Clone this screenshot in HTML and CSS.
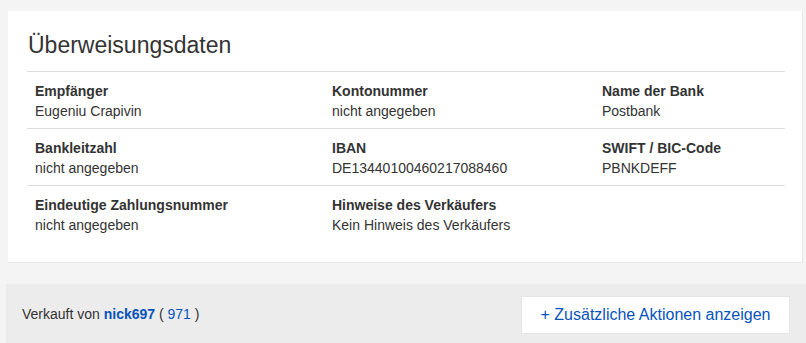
FILE: index.html
```html
<!DOCTYPE html>
<html lang="de">
<head>
    <meta charset="UTF-8">
    <title>Überweisungsdaten</title>
    <link rel="stylesheet" href="styles.css">
</head>
<body>
    <!-- Überweisungsdaten -->
    <div class="card">
        <h2 class="card-title">Überweisungsdaten</h2>
        <div class="info-row">
            <div class="info-cell">
                <div class="info-label">Empfänger</div>
                <div class="info-value">Eugeniu Crapivin</div>
            </div>
            <div class="info-cell">
                <div class="info-label">Kontonummer</div>
                <div class="info-value">nicht angegeben</div>
            </div>
            <div class="info-cell">
                <div class="info-label">Name der Bank</div>
                <div class="info-value">Postbank</div>
            </div>
        </div>
        <div class="info-row">
            <div class="info-cell">
                <div class="info-label">Bankleitzahl</div>
                <div class="info-value">nicht angegeben</div>
            </div>
            <div class="info-cell">
                <div class="info-label">IBAN</div>
                <div class="info-value">DE13440100460217088460</div>
            </div>
            <div class="info-cell">
                <div class="info-label">SWIFT / BIC-Code</div>
                <div class="info-value">PBNKDEFF</div>
            </div>
        </div>
        <div class="info-row">
            <div class="info-cell">
                <div class="info-label">Eindeutige Zahlungsnummer</div>
                <div class="info-value">nicht angegeben</div>
            </div>
            <div class="info-cell">
                <div class="info-label">Hinweise des Verkäufers</div>
                <div class="info-value">Kein Hinweis des Verkäufers</div>
            </div>
            <div class="info-cell"></div>
        </div>
    </div>

    <!-- Verkäufer-Leiste -->
    <div class="seller-bar">
        <div class="seller-info">
            Verkauft von <a href="#" class="seller-name">nick697</a>
            <span class="seller-score">( <a href="#">971</a> )</span>
        </div>
        <button class="more-btn">+ Zusätzliche Aktionen anzeigen</button>
    </div>
</body>
</html>
```

FILE: styles.css
```css
body {
    margin: 0;
    padding-top: 11px;
    background: #f4f4f4;
    font-family: "Liberation Sans", Arial, sans-serif;
    color: #333;
    overflow: hidden;
}
a {
    color: #0654ba;
    text-decoration: none;
}
/* Karte */
.card {
    margin: 0 3px 0 8px;
    padding: 0 17px 20px 19px;
    background: #fff;
    border: 1px solid #e8e8e8;
    border-top: 0;
    border-left: 0;
}
.card-title {
    margin: 0;
    padding: 21px 0 13px 1px;
    font-size: 23px;
    font-weight: normal;
    line-height: 26px;
}
.info-row {
    display: grid;
    grid-template-columns: 297px 270px 1fr;
    border-top: 1px solid #dcdcdc;
    padding: 9px 0 7px 8px;
}
.info-label {
    font-size: 14px;
    font-weight: bold;
    line-height: 20px;
}
.info-value {
    font-size: 14px;
    line-height: 20px;
}
/* Verkäufer-Leiste */
.seller-bar {
    margin: 21px 0 0 6px;
    padding: 12px 16px 12px 16px;
    background: #ececec;
    display: flex;
    align-items: center;
    justify-content: space-between;
}
.seller-info {
    font-size: 14px;
    padding-bottom: 2px;
}
.seller-name {
    font-weight: bold;
}
.more-btn {
    width: 269px;
    height: 38px;
    border: 1px solid #e6e6e6;
    background: #fff;
    color: #0654ba;
    font-family: "Liberation Sans", Arial, sans-serif;
    font-size: 16px;
    cursor: pointer;
}
```
